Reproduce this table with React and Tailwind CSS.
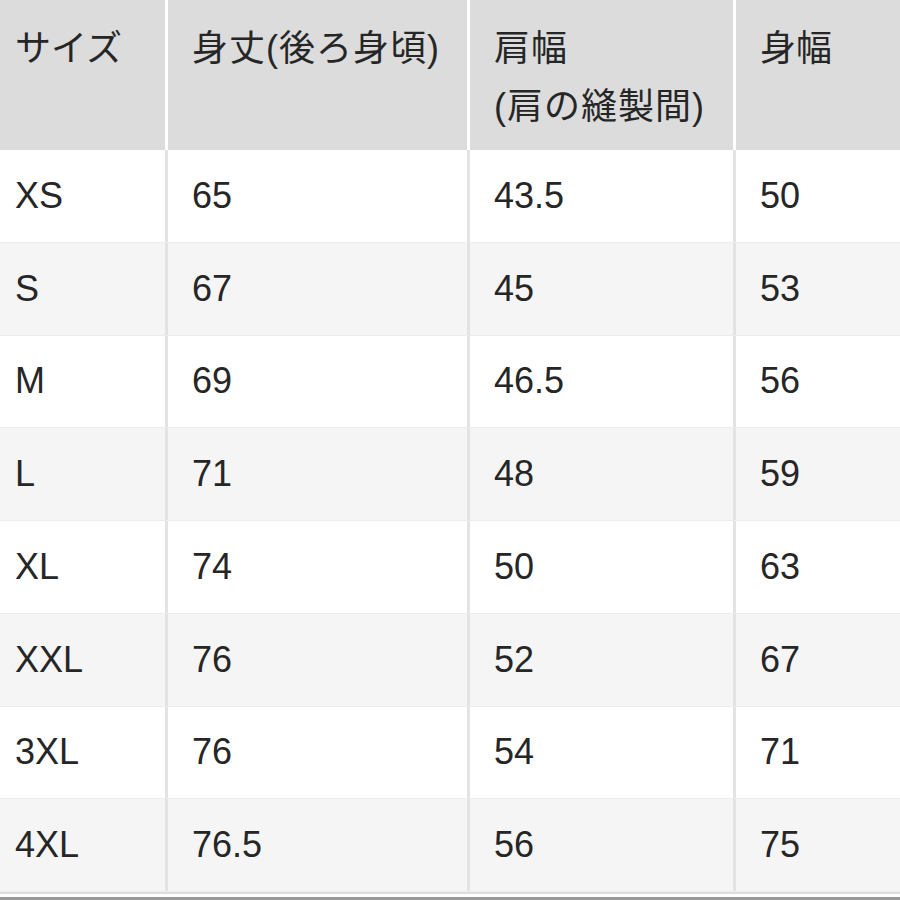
import React from "react";

const rows = [
  ["XS", "65", "43.5", "50"],
  ["S", "67", "45", "53"],
  ["M", "69", "46.5", "56"],
  ["L", "71", "48", "59"],
  ["XL", "74", "50", "63"],
  ["XXL", "76", "52", "67"],
  ["3XL", "76", "54", "71"],
  ["4XL", "76.5", "56", "75"],
];

const font = {
  fontFamily: '"Liberation Sans", "Noto Sans CJK JP", sans-serif',
};

export default function App() {
  return (
    <div
      className="w-[900px] h-[900px] bg-white overflow-hidden text-[36px] text-[#262626] leading-[58px]"
      style={font}
    >
      <div className="grid grid-cols-[168px_302px_266px_1fr] h-[150px] bg-[#dcdcdc]">
        <div className="pl-[15px] pt-[20px] border-r-[3px] border-white">サイズ</div>
        <div className="pl-[24px] pt-[20px] border-r-[3px] border-white tracking-[1px]">身丈(後ろ身頃)</div>
        <div className="pl-[24px] pt-[20px] border-r-[3px] border-white tracking-[1px]">
          <div>肩幅</div>
          <div>(肩の縫製間)</div>
        </div>
        <div className="pl-[24px] pt-[20px]">身幅</div>
      </div>
      {rows.map((r, i) => (
        <div
          key={r[0]}
          className={
            "grid grid-cols-[168px_302px_266px_1fr] h-[92.75px] border-b border-[#ececec] " +
            (i % 2 === 1 ? "bg-[#f5f5f5]" : "bg-white")
          }
        >
          <div className="pl-[15px] flex items-center border-r-[3px] border-[#e3e3e3]">{r[0]}</div>
          <div className="pl-[24px] flex items-center border-r-[3px] border-[#e3e3e3]">{r[1]}</div>
          <div className="pl-[24px] flex items-center border-r-[3px] border-[#e3e3e3]">{r[2]}</div>
          <div className="pl-[24px] flex items-center">{r[3]}</div>
        </div>
      ))}
      <div className="h-[2px] bg-[#dddddd]" />
      <div className="h-[3px] bg-white" />
      <div className="h-[3px] bg-[#9a9a9a]" />
    </div>
  );
}
